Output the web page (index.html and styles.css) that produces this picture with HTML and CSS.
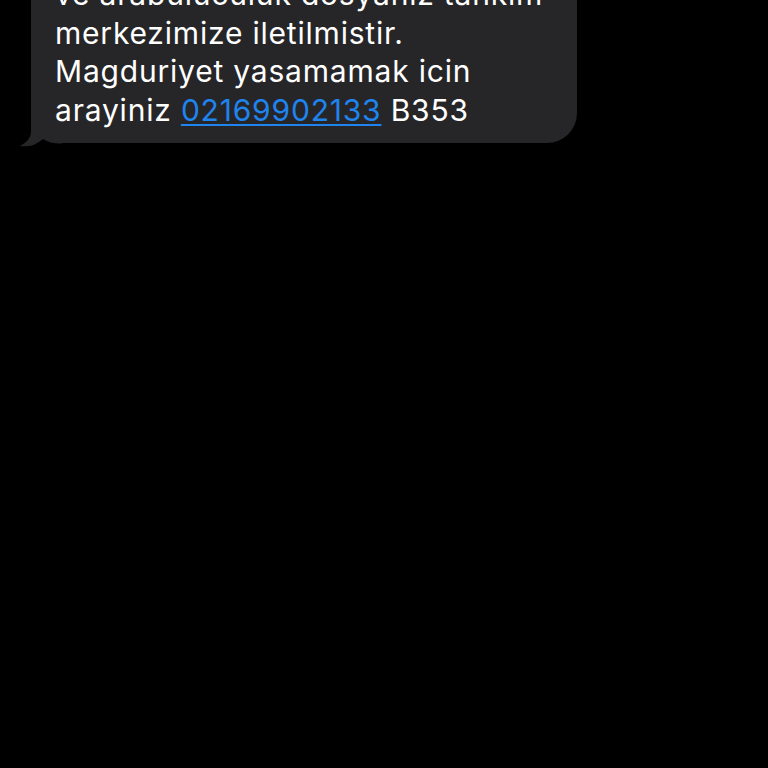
FILE: index.html
```html
<!DOCTYPE html>
<html lang="tr">
<head>
<meta charset="utf-8">
<title>Mesaj</title>
<link rel="stylesheet" href="styles.css">
</head>
<body>
<main class="chat">
  <div class="row">
    <div class="bubble">
      <svg class="tail" width="44" height="36" viewBox="0 0 44 36" aria-hidden="true">
        <path d="M13 0 L13 20 Q13 28 2 34 Q15 36 25 27 Q32 31.5 42 31.5 L44 31.5 L44 0 Z" fill="#262628"/>
      </svg>
      <p class="text">ve arabuluculuk dosyaniz tahkim<br>merkezimize iletilmistir.<br>Magduriyet yasamamak icin<br>arayiniz <a class="link" href="#">02169902133</a> B353</p>
    </div>
  </div>
</main>
</body>
</html>
```
FILE: styles.css
```css
html, body {
  margin: 0;
  padding: 0;
  background: #000;
  height: 100%;
  overflow: hidden;
}
.chat {
  display: flex;
  flex-direction: column;
  padding-left: 31px;
  margin-top: -38px;
}
.row {
  display: flex;
}
.bubble {
  position: relative;
  width: 546px;
  box-sizing: border-box;
  background: #262628;
  border-radius: 30px;
  padding: 13px 18px 14px 24px;
}
.text {
  position: relative;
  z-index: 1;
  margin: 0;
  font-family: Inter, "Noto Sans", sans-serif;
  font-size: 30px;
  line-height: 38.5px;
  color: #fff;
  letter-spacing: 0.8px;
}
.link {
  color: #1f84ee;
  text-decoration: underline;
  text-decoration-thickness: 2px;
  text-underline-offset: 3px;
}
.tail {
  position: absolute;
  left: -13px;
  bottom: -4.5px;
}
```
